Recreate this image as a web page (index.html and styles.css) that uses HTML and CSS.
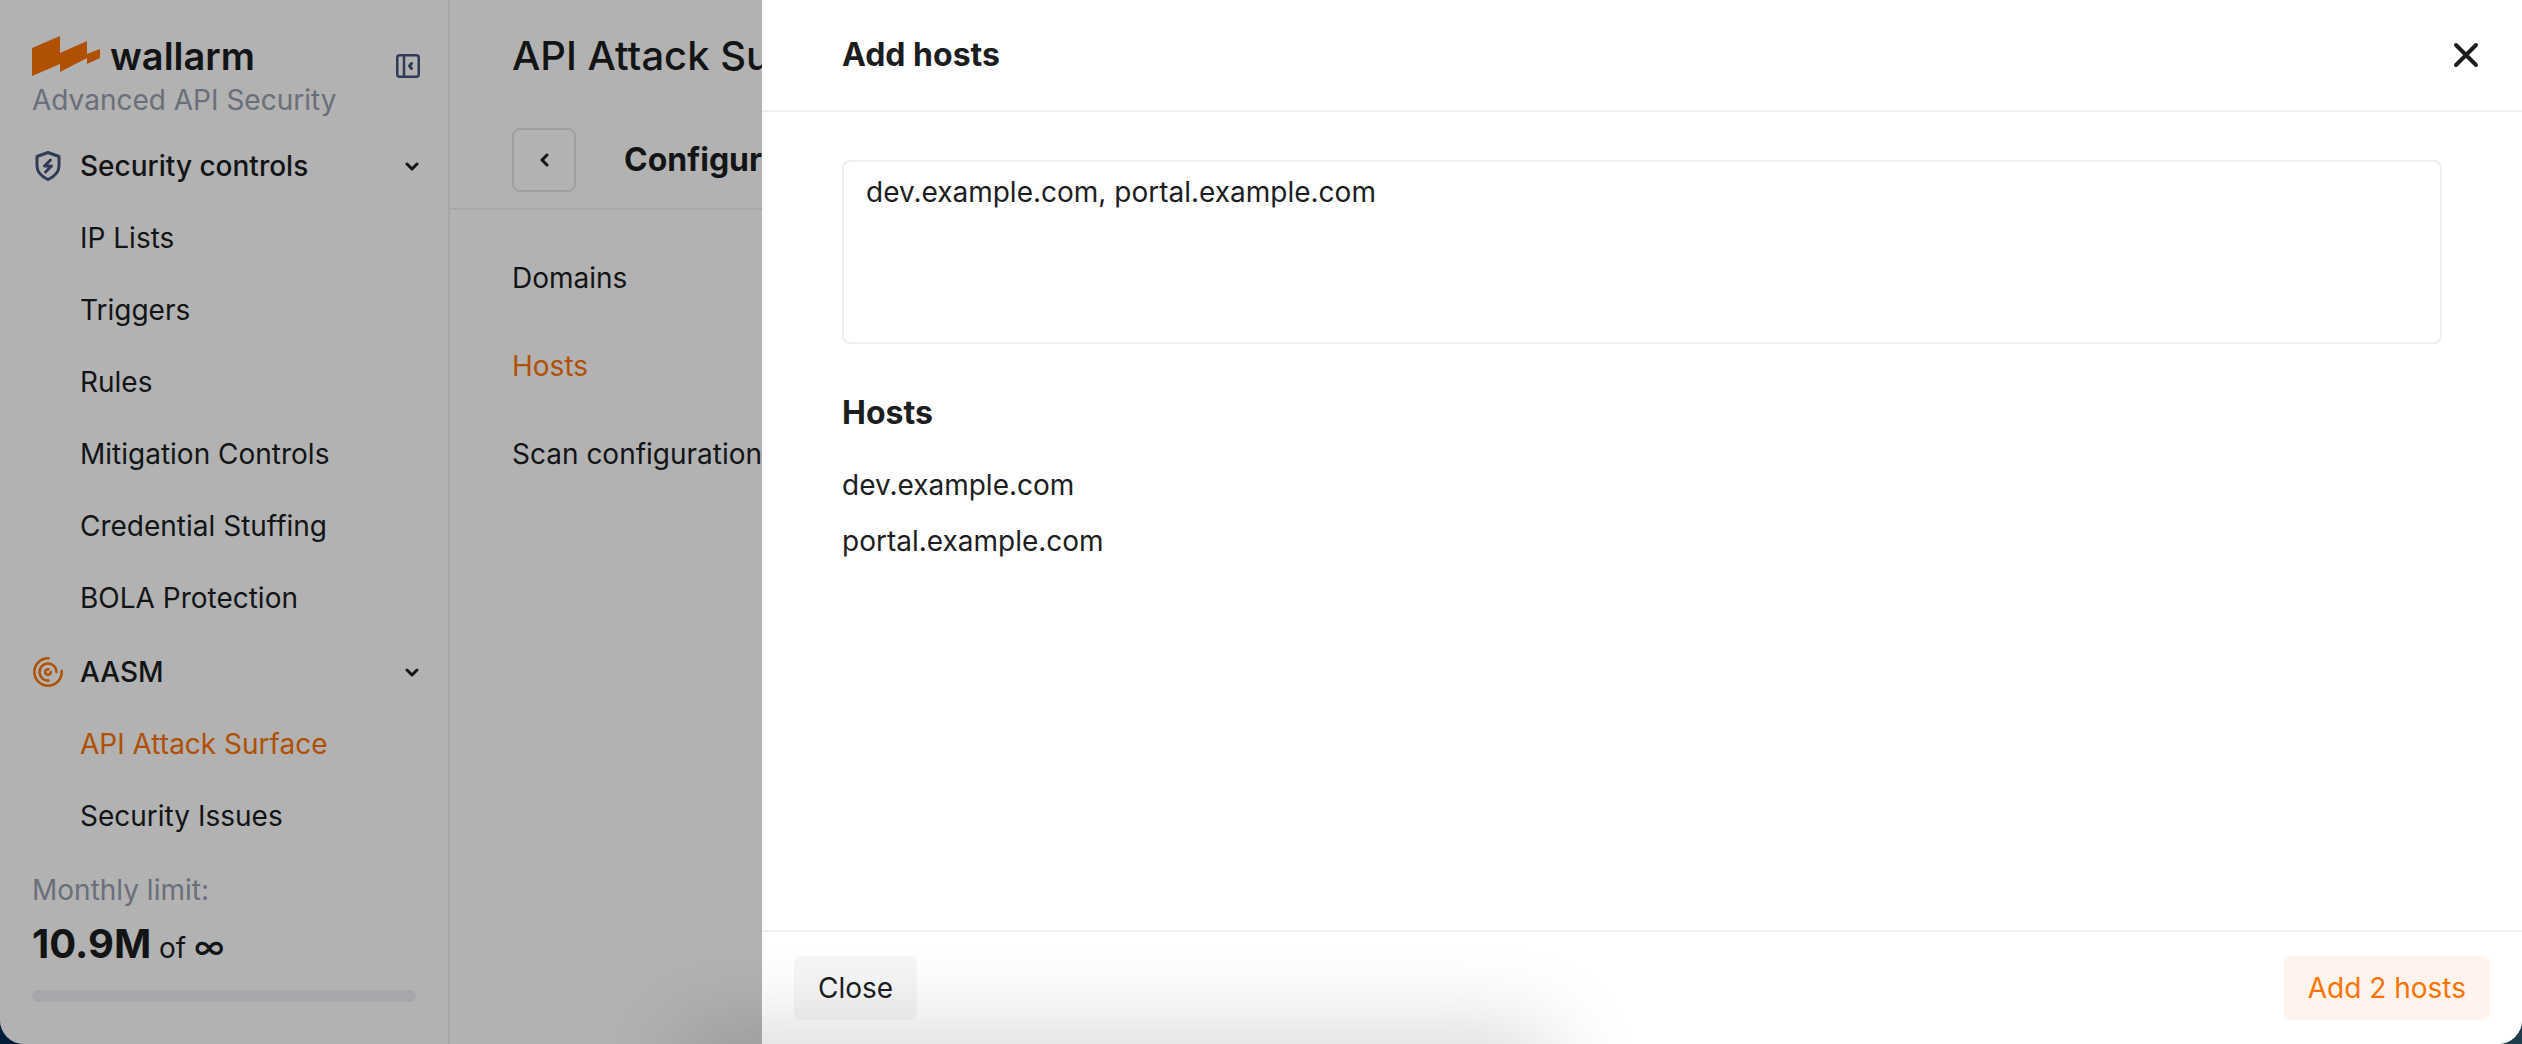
FILE: index.html
```html
<!DOCTYPE html>
<html lang="en">
<head>
<meta charset="utf-8">
<title>Wallarm – Add hosts</title>
<link rel="stylesheet" href="styles.css">
</head>
<body>
<div class="window">
  <aside class="sidebar">
    <header class="brand">
      <div class="brand-names">
        <a class="logo" href="#">
          <svg class="logo-mark" viewBox="0 0 68 40" aria-hidden="true"><path fill="currentColor" d="M0 12 28 0v17L55 5v13L68 13v9L55 28v-6L28 36v-8L0 40z"/></svg>
          <span>wallarm</span>
        </a>
        <p class="product">Advanced API Security</p>
      </div>
      <button class="icon-button" type="button" aria-label="Collapse menu">
        <svg class="icon-collapse" viewBox="0 0 24 24" aria-hidden="true"><rect x="1.250" y="1.250" width="21.500" height="21.500" rx="2.500"/><path d="M8 1v22"/><path stroke-width="3" d="m15.500 9.500-2 2.500 2 2.500"/></svg>
      </button>
    </header>

    <nav class="menu">
      <section class="group">
        <button class="group-title" type="button">
          <svg class="group-icon shield" viewBox="0 0 32 32" aria-hidden="true"><path d="M16 2.500 27 6.500V16c0 6-4.500 10.500-11 13.500C9.500 26.500 5 22 5 16V6.500z"/><path d="M18.500 10 12.500 16h7l-6 6"/></svg>
          <span>Security controls</span>
          <svg class="chevron" viewBox="0 0 14 9" aria-hidden="true"><path d="m2 2 5 5 5-5"/></svg>
        </button>
        <ul class="items">
          <li><a href="#">IP Lists</a></li>
          <li><a href="#">Triggers</a></li>
          <li><a href="#">Rules</a></li>
          <li><a href="#">Mitigation Controls</a></li>
          <li><a href="#">Credential Stuffing</a></li>
          <li><a href="#">BOLA Protection</a></li>
        </ul>
      </section>
      <section class="group">
        <button class="group-title" type="button">
          <svg class="group-icon active" viewBox="0 0 32 32" aria-hidden="true"><path d="M16.500 2.300A13.700 13.700 0 1 0 29.700 15"/><path d="M16.500 24.500A8.500 8.500 0 1 1 24.500 16"/><path d="M16.500 13.200A2.800 2.800 0 1 0 18.800 16"/></svg>
          <span>AASM</span>
          <svg class="chevron" viewBox="0 0 14 9" aria-hidden="true"><path d="m2 2 5 5 5-5"/></svg>
        </button>
        <ul class="items">
          <li><a class="active" href="#">API Attack Surface</a></li>
          <li><a href="#">Security Issues</a></li>
        </ul>
      </section>
    </nav>

    <footer class="limit">
      <p class="limit-label">Monthly limit:</p>
      <p class="limit-value"><strong>10.9M</strong> of <span class="infinity">∞</span></p>
      <div class="limit-bar"></div>
    </footer>
  </aside>

  <main class="page">
    <h1 class="page-title">API Attack Surface</h1>
    <div class="page-bar">
      <button class="back" type="button" aria-label="Back">
        <svg viewBox="0 0 9 14" aria-hidden="true"><path d="M7 2 2 7l5 5"/></svg>
      </button>
      <h2 class="heading">Configure</h2>
    </div>
    <nav class="tabs">
      <a href="#">Domains</a>
      <a class="active" href="#">Hosts</a>
      <a href="#">Scan configuration</a>
    </nav>
  </main>

  <div class="overlay"></div>

  <section class="drawer" role="dialog" aria-labelledby="drawer-title">
    <header class="drawer-head">
      <h2 class="heading" id="drawer-title">Add hosts</h2>
      <button class="icon-button" type="button" aria-label="Close dialog">
        <svg class="icon-close" viewBox="0 0 26 26" aria-hidden="true"><path d="m3 3 20 20M23 3 3 23"/></svg>
      </button>
    </header>
    <div class="drawer-body">
      <textarea class="hosts-input" aria-label="Hosts to add" spellcheck="false">dev.example.com, portal.example.com</textarea>
      <h3 class="heading">Hosts</h3>
      <ul class="hosts">
        <li>dev.example.com</li>
        <li>portal.example.com</li>
      </ul>
    </div>
    <footer class="drawer-foot">
      <button class="button" type="button">Close</button>
      <button class="button primary" type="button">Add 2 hosts</button>
    </footer>
  </section>

  <div class="bottom-shadow"></div>
</div>
</body>
</html>
```
FILE: styles.css
```css
:root {
  --text: #1c1d1f;
  --muted: #98a0ae;
  --line: #eeeef5;
  --accent: #fc7303;
  --navy: #46557f;
}

* {
  box-sizing: border-box;
}

body {
  margin: 0;
  background: linear-gradient(90deg, #021d3a, #1f3d4d);
  color: var(--text);
  font: 400 28px/40px Inter, "Liberation Sans", sans-serif;
}

h1, h2, h3, p, ul {
  margin: 0;
  padding: 0;
}

ul {
  list-style: none;
}

a {
  color: inherit;
  text-decoration: none;
}

button {
  border: 0;
  padding: 0;
  background: none;
  color: inherit;
  font: inherit;
}

svg {
  display: block;
  flex: none;
  fill: none;
  stroke: currentColor;
  stroke-linecap: round;
  stroke-linejoin: round;
}

.window {
  position: relative;
  display: flex;
  min-height: 100vh;
  overflow: hidden;
  border-radius: 0 0 24px 24px;
  background: #fff;
}

.active {
  color: var(--accent);
}

.heading {
  font-size: 32px;
  font-weight: 700;
}

/* Sidebar */
.sidebar {
  display: flex;
  flex: none;
  flex-direction: column;
  width: 450px;
  padding: 32px 32px 42px;
  border-right: 2px solid var(--line);
}

.brand {
  display: flex;
  align-items: flex-start;
  justify-content: space-between;
  height: 98px;
}

.logo {
  display: flex;
  align-items: center;
  gap: 10px;
  height: 48px;
  font-size: 38px;
  font-weight: 600;
}

.logo-mark {
  width: 68px;
  height: 40px;
  color: var(--accent);
  stroke: none;
}

.product,
.limit-label {
  color: var(--muted);
}

.icon-button {
  flex: none;
}

.brand .icon-button {
  padding: 22px 0;
  margin-right: -4px;
}

.icon-collapse {
  width: 24px;
  height: 24px;
  color: var(--navy);
  stroke-width: 2.500;
}

.menu {
  display: flex;
  flex-direction: column;
  gap: 2px;
}

.group-title {
  display: flex;
  align-items: center;
  width: 100%;
  height: 72px;
  gap: 16px;
  font-weight: 500;
  text-align: left;
}

.group-title span {
  flex: 1;
}

.group-icon {
  width: 32px;
  height: 32px;
  stroke-width: 2.500;
}

.shield {
  color: var(--navy);
  stroke-width: 3;
}

.chevron {
  width: 14px;
  height: 9px;
  margin-right: -3px;
  stroke-width: 3;
}

.items a {
  display: block;
  padding: 16px 0 16px 48px;
}

.limit {
  margin-top: auto;
}

.limit-value {
  margin: 8px 0 16px;
  line-height: 52px;
}

.limit-value strong {
  font-size: 40px;
  font-weight: 700;
}

.infinity {
  font-size: 32px;
  font-weight: 500;
}

.limit-bar {
  height: 12px;
  border-radius: 6px;
  background: var(--line);
}

/* Page */
.page {
  flex: 1;
  min-width: 0;
  white-space: nowrap;
}

.page-title {
  padding: 32px 62px 0;
  font-size: 40px;
  font-weight: 500;
  line-height: 48px;
}

.page-bar {
  display: flex;
  align-items: center;
  gap: 48px;
  padding: 48px 62px 16px;
  border-bottom: 2px solid var(--line);
}

.back {
  display: grid;
  place-items: center;
  width: 64px;
  height: 64px;
  border: 2px solid #e3e3e3;
  border-radius: 8px;
}

.back svg {
  width: 9px;
  height: 14px;
  stroke-width: 3;
}

.tabs {
  display: flex;
  flex-direction: column;
  gap: 48px;
  padding: 48px 62px;
}

/* Drawer */
.overlay {
  position: absolute;
  inset: 0;
  background: rgb(0 0 0 / 30%);
}

.drawer {
  position: absolute;
  inset: 0 0 0 762px;
  display: flex;
  flex-direction: column;
  background: #fff;
}

.drawer-head {
  display: flex;
  align-items: center;
  justify-content: space-between;
  padding: 35px 43px 35px 80px;
  border-bottom: 2px solid var(--line);
}

.icon-close {
  width: 26px;
  height: 26px;
  stroke-width: 4;
}

.drawer-body {
  display: flex;
  flex: 1;
  flex-direction: column;
  gap: 32px;
  padding: 48px 80px;
}

.hosts-input {
  display: block;
  width: 100%;
  height: 184px;
  padding: 10px 22px;
  border: 2px solid var(--line);
  border-radius: 8px;
  outline: 0;
  background: none;
  color: inherit;
  font: inherit;
  resize: none;
}

.drawer-body .heading {
  padding: 17px 0 0;
}

.hosts {
  display: flex;
  flex-direction: column;
  gap: 16px;
}

.drawer-foot {
  display: flex;
  justify-content: space-between;
  padding: 24px 32px;
  border-top: 2px solid var(--line);
}

.button {
  height: 64px;
  padding: 0 24px;
  border-radius: 8px;
  background: #f6f6f6;
}

.button.primary {
  background: #fff3ed;
  color: var(--accent);
}

/* Shadow cast on the window from below its bottom edge */
.bottom-shadow {
  position: absolute;
  top: 100%;
  left: 690px;
  width: 850px;
  height: 60px;
  box-shadow: 0 0 90px 10px rgb(0 0 0 / 18%);
  pointer-events: none;
}
```
